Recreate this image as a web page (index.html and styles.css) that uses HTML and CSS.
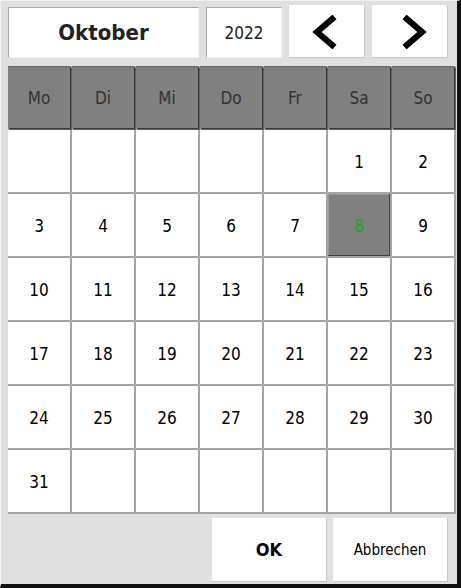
FILE: index.html
```html
<!DOCTYPE html>
<html lang="de">
<head>
<meta charset="utf-8">
<title>Datum wählen</title>
<link rel="stylesheet" href="styles.css">
</head>
<body>
<div class="frame">
  <div class="top">
    <div class="field month">Oktober</div>
    <div class="field year">2022</div>
    <button class="nav">
      <svg width="26" height="34" viewBox="0 0 26 34"><path d="M22.5 2 L5 17 L22.5 32" fill="none" stroke="#000" stroke-width="6.2"/></svg>
    </button>
    <button class="nav next">
      <svg width="26" height="34" viewBox="0 0 26 34"><path d="M3.5 2 L21 17 L3.5 32" fill="none" stroke="#000" stroke-width="6.2"/></svg>
    </button>
  </div>
  <div class="grid">
    <div class="head">Mo</div><div class="head">Di</div><div class="head">Mi</div><div class="head">Do</div><div class="head">Fr</div><div class="head">Sa</div><div class="head">So</div>
    <div class="day"></div><div class="day"></div><div class="day"></div><div class="day"></div><div class="day"></div><div class="day">1</div><div class="day">2</div>
    <div class="day">3</div><div class="day">4</div><div class="day">5</div><div class="day">6</div><div class="day">7</div><div class="day sel">8</div><div class="day">9</div>
    <div class="day">10</div><div class="day">11</div><div class="day">12</div><div class="day">13</div><div class="day">14</div><div class="day">15</div><div class="day">16</div>
    <div class="day">17</div><div class="day">18</div><div class="day">19</div><div class="day">20</div><div class="day">21</div><div class="day">22</div><div class="day">23</div>
    <div class="day">24</div><div class="day">25</div><div class="day">26</div><div class="day">27</div><div class="day">28</div><div class="day">29</div><div class="day">30</div>
    <div class="day">31</div><div class="day"></div><div class="day"></div><div class="day"></div><div class="day"></div><div class="day"></div><div class="day"></div>
  </div>
  <div class="footer">
    <button class="btn ok">OK</button>
    <button class="btn cancel">Abbrechen</button>
  </div>
</div>
</body>
</html>
```
FILE: styles.css
```css
html, body {
  margin: 0;
  padding: 0;
  background: #e0e0e0;
}
.frame {
  box-sizing: border-box;
  width: 461px;
  height: 588px;
  background: #e0e0e0;
  border-top: 1px solid #f2f2f2;
  border-left: 1px solid #f2f2f2;
  border-right: 4px solid #111;
  border-bottom: 4px solid #111;
  font-family: "DejaVu Sans Condensed", "DejaVu Sans", sans-serif;
  font-stretch: condensed;
  display: flex;
  flex-direction: column;
}
.top {
  display: flex;
  align-items: flex-end;
  gap: 7px;
  height: 57px;
  box-sizing: border-box;
  padding: 4px 0 0 7px;
}
.field {
  box-sizing: border-box;
  height: 51px;
  background: #fff;
  border-top: 1px solid #a8a8a8;
  border-left: 1px solid #a8a8a8;
  border-right: 1px solid #f4f4f4;
  border-bottom: 1px solid #f4f4f4;
  display: flex;
  align-items: center;
  justify-content: center;
  color: #222;
}
.month {
  width: 191px;
  font-weight: bold;
  font-size: 22px;
}
.year {
  width: 76px;
  font-size: 17px;
}
.nav {
  box-sizing: border-box;
  width: 76px;
  height: 53px;
  margin: 0;
  padding: 0;
  background: #fff;
  border: none;
  border-right: 1px solid #c8c8c8;
  border-bottom: 1px solid #c8c8c8;
  display: flex;
  align-items: center;
  justify-content: center;
}
.nav svg {
  display: block;
  margin-right: 3px;
  margin-top: 2px;
}
.nav.next svg {
  margin-right: 0;
  margin-left: 8px;
}
.grid {
  margin: 8px 0 0 7px;
  width: 448px;
  height: 448px;
  box-sizing: border-box;
  padding: 0 2px 2px 0;
  display: grid;
  grid-template-columns: repeat(7, 62px);
  grid-template-rows: repeat(7, 62px);
  gap: 2px;
  background: #a4a4a4;
}
.head {
  background: #808080;
  color: #333;
  font-size: 17px;
  display: flex;
  align-items: center;
  justify-content: center;
  padding-top: 1px;
  box-shadow: 1px 1px 0 #3a3a3a, 2px 2px 0 #606060;
  border-top: 1px solid #666;
}
.day {
  background: #fff;
  color: #000;
  font-size: 17px;
  display: flex;
  align-items: center;
  justify-content: center;
  padding-top: 2px;
}
.day.sel {
  background: #808080;
  color: #1aaa1a;
  box-shadow: inset -1px -1px 0 #404040, inset 1px 1px 0 #9a9a9a;
}
.footer {
  display: flex;
  justify-content: flex-end;
  gap: 6px;
  margin-top: 4px;
  padding-right: 9px;
}
.btn {
  box-sizing: border-box;
  width: 115px;
  height: 64px;
  margin: 0;
  padding: 0;
  background: #fff;
  border: none;
  border-right: 1px solid #c8c8c8;
  border-bottom: 1px solid #c8c8c8;
  font-family: "DejaVu Sans Condensed", "DejaVu Sans", sans-serif;
  font-stretch: condensed;
  color: #000;
}
.ok {
  font-weight: bold;
  font-size: 18px;
}
.cancel {
  font-size: 15px;
}
```
